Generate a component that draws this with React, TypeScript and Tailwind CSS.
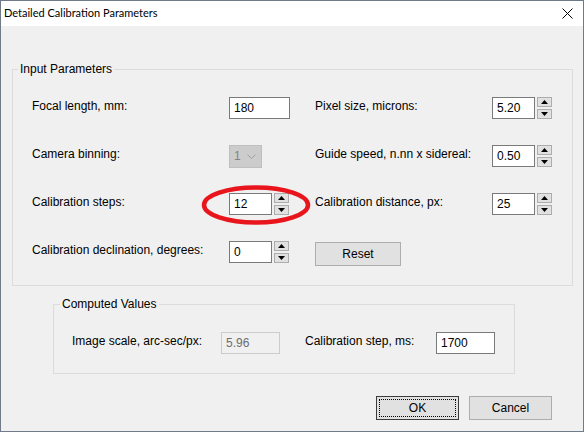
import React from "react";

const font = { fontFamily: '"Liberation Sans", Arial, sans-serif' };
const titleFont = { fontFamily: 'Lato, "Liberation Sans", sans-serif' };

function Spinner() {
  return (
    <div className="flex flex-col gap-[2px] ml-[2px]">
      <div className="w-[15px] h-[10px] bg-[#e1e1e1] border border-[#adadad] flex items-center justify-center">
        <svg width="7" height="4" viewBox="0 0 7 4"><path d="M0 4 L3.5 0 L7 4 Z" fill="#000" /></svg>
      </div>
      <div className="w-[15px] h-[10px] bg-[#e1e1e1] border border-[#adadad] flex items-center justify-center">
        <svg width="7" height="4" viewBox="0 0 7 4"><path d="M0 0 L3.5 4 L7 0 Z" fill="#000" /></svg>
      </div>
    </div>
  );
}

function TextBox({ value, w }: { value: string; w: string }) {
  return (
    <div className={`${w} h-[22px] bg-white border border-[#7a7a7a] flex items-center pl-[4px] text-[12px] text-black`}>
      {value}
    </div>
  );
}

function SpinBox({ value }: { value: string }) {
  return (
    <div className="flex items-center">
      <TextBox value={value} w="w-[43px]" />
      <Spinner />
    </div>
  );
}

function Label({ children }: { children: React.ReactNode }) {
  return <div className="self-start mt-[2px] leading-[14px] text-[12px] text-black whitespace-nowrap">{children}</div>;
}

export default function App() {
  return (
    <div className="w-[584px] h-[432px] border border-[#707b88] bg-[#f0f0f0] flex flex-col" style={font}>
      <div className="h-[25px] bg-white flex items-center justify-between pl-[3px] pr-[10px] shrink-0">
        <span className="text-[11px] text-black" style={titleFont}>Detailed Calibration Parameters</span>
        <svg width="11" height="11" viewBox="0 0 11 11">
          <path d="M0.5 0.5 L10.5 10.5 M10.5 0.5 L0.5 10.5" stroke="#000" strokeWidth="1" />
        </svg>
      </div>
      <div className="flex flex-col">
        <fieldset className="mt-[35px] ml-[11px] w-[561px] border border-[#dcdcdc] pt-[20px] pl-[19px] pb-[22px]">
          <legend className="ml-[-14px] px-[2px] leading-[16px] text-[12px] text-black">Input Parameters</legend>
          <div className="grid grid-cols-[197px_86px_177px_auto] grid-rows-[22px_22px_22px_22px] gap-y-[26px] items-center">
            <Label>Focal length, mm:</Label>
            <TextBox value="180" w="w-[61px]" />
            <Label>Pixel size, microns:</Label>
            <SpinBox value="5.20" />

            <Label>Camera binning:</Label>
            <div className="w-[33px] h-[23px] bg-[#cccccc] border border-[#bfbfbf] flex items-center justify-between pl-[4px] pr-[5px] text-[12px] text-[#838383]">
              <span>1</span>
              <svg width="9" height="5" viewBox="0 0 9 5"><path d="M0.5 0.5 L4.5 4.5 L8.5 0.5" stroke="#a0a0a0" fill="none" strokeWidth="1" /></svg>
            </div>
            <Label>Guide speed, n.nn x sidereal:</Label>
            <SpinBox value="0.50" />

            <Label>Calibration steps:</Label>
            <div className="relative">
              <SpinBox value="12" />
              <svg className="absolute left-[-29px] top-[-8px] pointer-events-none" width="112" height="42" viewBox="0 0 112 42">
                <ellipse cx="56" cy="20" rx="52" ry="17.5" stroke="#e8151d" strokeWidth="4.5" fill="none" />
              </svg>
            </div>
            <Label>Calibration distance, px:</Label>
            <SpinBox value="25" />

            <Label>Calibration declination, degrees:</Label>
            <SpinBox value="0" />
            <div className="col-span-2 self-start">
              <button className="mt-[1px] w-[86px] h-[24px] bg-[#e1e1e1] border border-[#adadad] text-[12px] text-black leading-none">Reset</button>
            </div>
          </div>
        </fieldset>

        <fieldset className="mt-[10px] ml-[52px] w-[462px] border border-[#dcdcdc] pt-[20px] pl-[18px] pb-[19px]">
          <legend className="ml-[-12px] px-[2px] leading-[16px] text-[12px] text-black">Computed Values</legend>
          <div className="grid grid-cols-[149px_84px_131px_auto] items-center">
            <Label>Image scale, arc-sec/px:</Label>
            <div className="w-[59px] h-[22px] bg-[#f0f0f0] border border-[#cccccc] flex items-center pl-[4px] text-[12px] text-[#6d6d6d]">5.96</div>
            <Label>Calibration step, ms:</Label>
            <TextBox value="1700" w="w-[59px]" />
          </div>
        </fieldset>

        <div className="flex justify-end gap-[10px] mt-[22px] pr-[31px]">
          <button className="w-[83px] h-[24px] bg-[#e1e1e1] border border-[#3c3c3c] p-[2px] text-[12px] text-black">
            <div className="w-full h-full border border-dotted border-black flex items-center justify-center">OK</div>
          </button>
          <button className="w-[83px] h-[24px] bg-[#e1e1e1] border border-[#adadad] text-[12px] text-black">Cancel</button>
        </div>
      </div>
    </div>
  );
}
